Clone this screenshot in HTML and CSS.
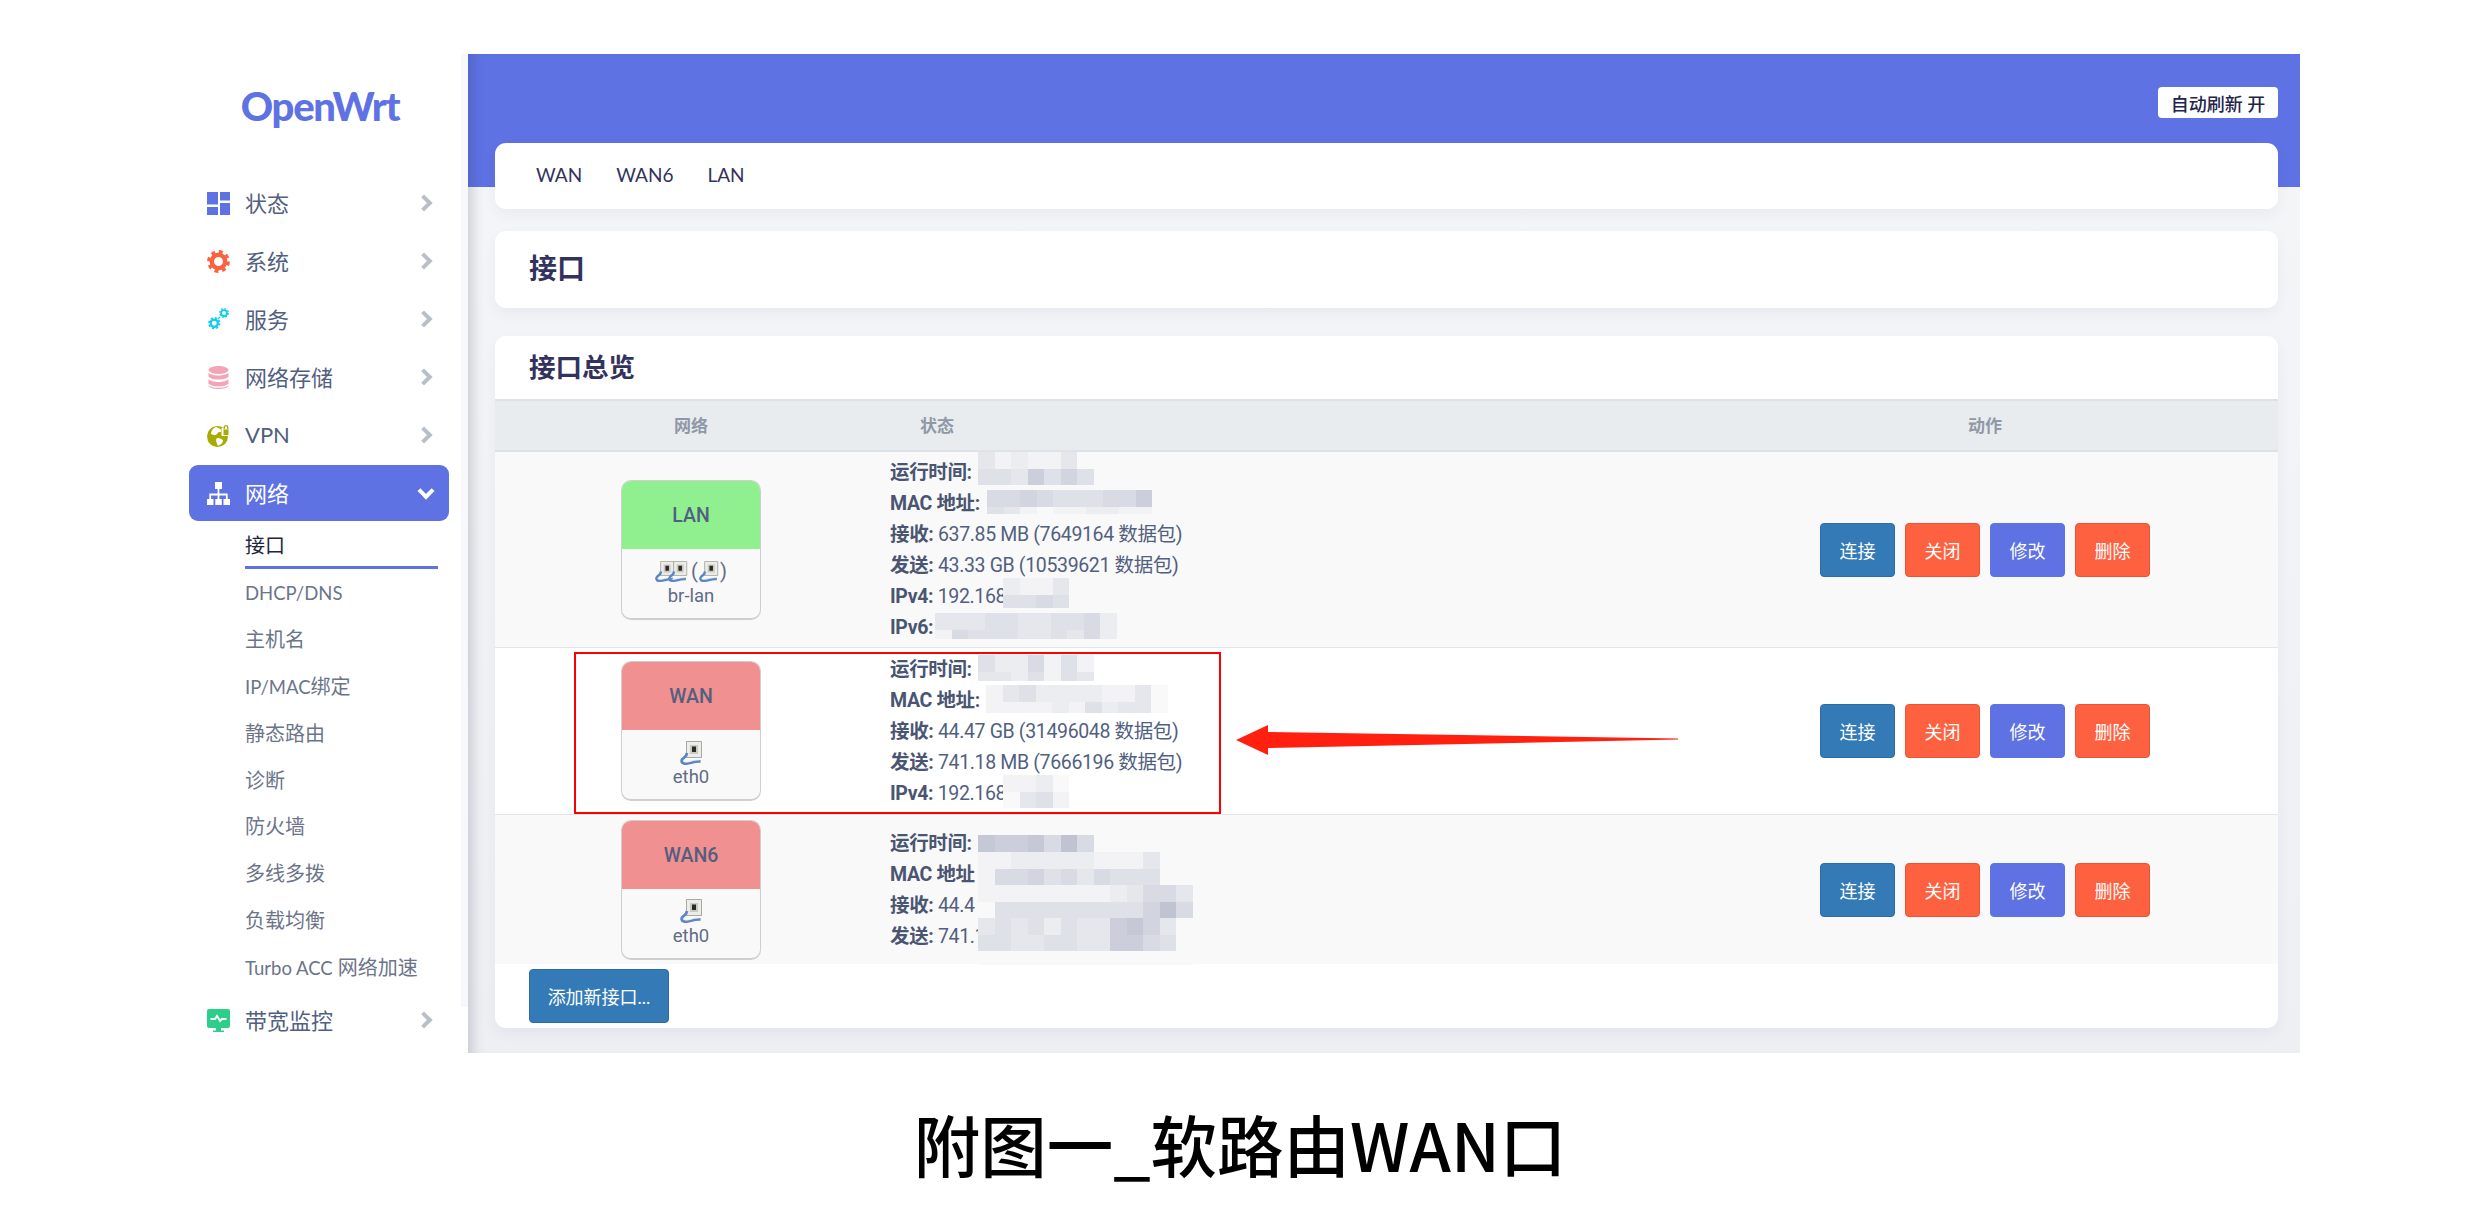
FILE: index.html
```html
<!DOCTYPE html>
<html lang="zh-CN">
<head>
    <meta charset="UTF-8">
    <title>附图一_软路由WAN口</title>
    <link rel="stylesheet" href="styles.css">
</head>
<body>

<svg class="defs" width="0" height="0">
    <symbol id="gear" viewBox="0 0 24 24">
        <circle cx="12" cy="12" r="7" fill="none" stroke="currentColor" stroke-width="4.6"/>
        <circle cx="12" cy="12" r="10.3" fill="none" stroke="currentColor" stroke-width="3.2" stroke-dasharray="4.1 3.99"/>
    </symbol>
    <symbol id="eth" viewBox="0 0 22 24">
        <path d="M6 .5h15v16H6z" fill="#ecece8" stroke="#a9a9a4"/>
        <path d="M9.500 4h8v9h-8z" fill="#c9c9c2"/>
        <path d="M11.500 5.500h4v5.500h-4z" fill="#2b2b26"/>
        <path d="M6.500 12c-.5 4-3 4.500-4.500 6s-1 4 1.500 4.500c6 1 8-2.500 16.500-2" fill="none" stroke="#5c87c2" stroke-width="2.800"/>
        <path d="M4 21c5 .5 8-2 15-2" fill="none" stroke="#dfe8f4" stroke-width=".8"/>
    </symbol>
</svg>

<div class="frame">

    <aside class="sidebar">
        <div class="logo">OpenWrt</div>

        <a class="nav-item">
            <svg class="nav-icon" viewBox="0 0 23 23" fill="#5e72e4"><path d="M0 0h11v12.500H0zM13 0h10v8.500H13zM0 15h11v8H0zM13 11h10v12H13z"/></svg>
            <span>状态</span><i class="chev"></i>
        </a>
        <a class="nav-item">
            <svg class="nav-icon icon-orange"><use href="#gear"/></svg>
            <span>系统</span><i class="chev"></i>
        </a>
        <a class="nav-item">
            <svg class="nav-icon icon-cyan" viewBox="0 0 23 23">
                <use href="#gear" x="1" y="9" width="12.500" height="12.500"/>
                <use href="#gear" x="12" y="0" width="10" height="10"/>
                <path d="M11 11l2-2" stroke="currentColor" stroke-width="1.500"/>
            </svg>
            <span>服务</span><i class="chev"></i>
        </a>
        <a class="nav-item">
            <svg class="nav-icon" viewBox="0 0 23 23" fill="#f3a4b5">
                <ellipse cx="11.500" cy="4" rx="10" ry="4"/>
                <path d="M1.500 6.500c2 4 18 4 20 0v4c-2 4-18 4-20 0zM1.500 13c2 4 18 4 20 0v6c0 5.300-20 5.300-20 0z"/>
                <path d="M1.500 18.200c3 3.800 17 3.800 20 0" fill="none" stroke="#fff" stroke-width="1.400"/>
            </svg>
            <span>网络存储</span><i class="chev"></i>
        </a>
        <a class="nav-item">
            <svg class="nav-icon" viewBox="0 0 23 23">
                <circle cx="10.500" cy="12.500" r="10.500" fill="#a8ab00"/>
                <path d="M9 3c4 1 6 3 5 5-2 0-3 0-4 2-2 2-4 1-6 0 0-3 2-6 5-7zM10 14c3 0 6 1 6 3s-3 4-5 5c-1-3-3-5-1-8z" fill="#fff"/>
                <path d="M14.500 4h8v8h-8z" fill="#fff"/>
                <path d="M16.500 5.500h5v5.500h-5z" fill="#a8ab00"/>
                <path d="M17.200 5.500v-2a1.800 1.800 0 013.600 0v2" fill="none" stroke="#a8ab00" stroke-width="1.300"/>
            </svg>
            <span>VPN</span><i class="chev"></i>
        </a>
        <a class="nav-item active">
            <svg class="nav-icon" viewBox="0 0 23 23" fill="#fff">
                <path d="M8 0h7v7H8zM0 17h6.500v6H0zM8.300 17h6.500v6H8.300zM16.500 17H23v6h-6.500z"/>
                <path d="M3.200 17v-4.500h16.600V17M11.500 7v10" fill="none" stroke="#fff" stroke-width="1.800"/>
            </svg>
            <span>网络</span><i class="chev-down"></i>
        </a>

        <div class="sub-nav">
            <a class="sub-item current">接口</a>
            <a class="sub-item"><span class="latin">DHCP/DNS</span></a>
            <a class="sub-item">主机名</a>
            <a class="sub-item"><span class="latin">IP/MAC</span>绑定</a>
            <a class="sub-item">静态路由</a>
            <a class="sub-item">诊断</a>
            <a class="sub-item">防火墙</a>
            <a class="sub-item">多线多拨</a>
            <a class="sub-item">负载均衡</a>
            <a class="sub-item"><span class="latin">Turbo ACC</span> 网络加速</a>
        </div>

        <a class="nav-item">
            <svg class="nav-icon" viewBox="0 0 23 23">
                <path d="M2 0h19a2 2 0 012 2v15a2 2 0 01-2 2H2a2 2 0 01-2-2V2a2 2 0 012-2zM9 19h5v2.500h3V23H6v-1.500h3z" fill="#2dce89"/>
                <path d="M3.500 10h4.500l2-3 3 5 2-2h4.500" fill="none" stroke="#fff" stroke-width="1.800"/>
            </svg>
            <span>带宽监控</span><i class="chev"></i>
        </a>
    </aside>

    <main class="content">
        <header class="topbar">
            <button class="refresh">自动刷新 开</button>
        </header>

        <div class="card tabs">
            <a>WAN</a>
            <a>WAN6</a>
            <a>LAN</a>
        </div>

        <div class="card page-title">
            <h2>接口</h2>
        </div>

        <div class="card overview">
            <h3>接口总览</h3>

            <div class="head-row">
                <div class="col-net">网络</div>
                <div class="col-status">状态</div>
                <div class="col-action">动作</div>
            </div>

            <div class="row row-lan">
                <div class="col-net">
                    <div class="iface">
                        <div class="iface-name lan">LAN</div>
                        <div class="iface-body">
                            <div class="iface-icons">
                                <svg class="eth small"><use href="#eth"/></svg><svg class="eth small overlap"><use href="#eth"/></svg>
                                <span class="paren">(</span><svg class="eth small"><use href="#eth"/></svg><span class="paren">)</span>
                            </div>
                            <span>br-lan</span>
                        </div>
                    </div>
                </div>
                <div class="col-status status">
                    <p><b>运行时间:</b></p>
                    <p><b>MAC 地址:</b></p>
                    <p><b>接收:</b> 637.85 MB (7649164 数据包)</p>
                    <p><b>发送:</b> 43.33 GB (10539621 数据包)</p>
                    <p><b>IPv4:</b> 192.168.</p>
                    <p><b>IPv6:</b></p>
                </div>
                <div class="col-action actions">
                    <button class="btn blue">连接</button>
                    <button class="btn orange">关闭</button>
                    <button class="btn indigo">修改</button>
                    <button class="btn orange">删除</button>
                </div>
                <div class="mosaic m-lan-up" data-rows="3121130 4437464"></div>
                <div class="mosaic m-lan-mac" data-rows="55654445570 43101122110"></div>
                <div class="mosaic m-lan-ip4" data-rows="2113 4454"></div>
                <div class="mosaic m-lan-ip6" data-rows="33344334452 15444334352"></div>
            </div>

            <div class="row row-wan">
                <div class="col-net">
                    <div class="iface">
                        <div class="iface-name wan">WAN</div>
                        <div class="iface-body">
                            <div class="iface-icons"><svg class="eth"><use href="#eth"/></svg></div>
                            <span>eth0</span>
                        </div>
                    </div>
                </div>
                <div class="col-status status">
                    <p><b>运行时间:</b></p>
                    <p><b>MAC 地址:</b></p>
                    <p><b>接收:</b> 44.47 GB (31496048 数据包)</p>
                    <p><b>发送:</b> 741.18 MB (7666196 数据包)</p>
                    <p><b>IPv4:</b> 192.168.</p>
                </div>
                <div class="col-action actions">
                    <button class="btn blue">连接</button>
                    <button class="btn orange">关闭</button>
                    <button class="btn indigo">修改</button>
                    <button class="btn orange">删除</button>
                </div>
                <div class="mosaic m-wan-up" data-rows="4225141 3324143"></div>
                <div class="mosaic m-wan-mac" data-rows="13422221130 11112142330"></div>
                <div class="mosaic m-wan-ip4" data-rows="1120 0341"></div>
            </div>

            <div class="row row-wan6">
                <div class="col-net">
                    <div class="iface">
                        <div class="iface-name wan">WAN6</div>
                        <div class="iface-body">
                            <div class="iface-icons"><svg class="eth"><use href="#eth"/></svg></div>
                            <span>eth0</span>
                        </div>
                    </div>
                </div>
                <div class="col-status status">
                    <p><b>运行时间:</b></p>
                    <p><b>MAC 地址</b></p>
                    <p><b>接收:</b> 44.4</p>
                    <p><b>发送:</b> 741.1</p>
                </div>
                <div class="col-action actions">
                    <button class="btn blue">连接</button>
                    <button class="btn orange">关闭</button>
                    <button class="btn indigo">修改</button>
                    <button class="btn orange">删除</button>
                </div>
                <div class="mosaic m-wan6-up" data-rows="8778595"></div>
                <div class="mosaic m-wan6-big" data-rows="11222221113 15564535444 1111111123553 0444444444695 343424337863 443344337754 0000000000000"></div>
            </div>

            <div class="add-row">
                <button class="btn blue add">添加新接口...</button>
            </div>
        </div>
    </main>

    <div class="highlight"></div>
    <svg class="arrow" viewBox="0 0 442 30"><path d="M0 15L32 0v7l410 6.500v1L32 23v7z"/></svg>
</div>

<p class="caption">附图一_软路由WAN口</p>

<script src="mosaic.js"></script>
</body>
</html>
```

FILE: styles.css
```css
body{
    margin: 0;
    background: #ffffff;
    font-family: "Lato", "Noto Sans CJK SC", sans-serif;
    color: #525f7f;
}

.defs{
    position: absolute;
}

.frame{
    position: relative;
    display: flex;
    width: 2130px;
    height: 999px;
    margin: 54px 0 0 170px;
}

/* sidebar */

.sidebar{
    box-sizing: border-box;
    flex: none;
    width: 298px;
    padding: 0 19px 0 19px;
    background: linear-gradient(to right, #ffffff 291px, #f6f8fb 291px);
    background-size: 100% 953px;
    background-repeat: no-repeat;
}

.logo{
    height: 120px;
    padding-top: 27px;
    box-sizing: border-box;
    text-align: center;
    font-family: "Lato", sans-serif;
    font-weight: 900;
    font-size: 40px;
    line-height: 50px;
    letter-spacing: -1.300px;
    color: #5e72e4;
    margin-right: -2px;
}

.nav-item{
    display: flex;
    align-items: center;
    height: 58px;
    padding-left: 18px;
    font-size: 22px;
    color: #525f7f;
}

.nav-item span{
    margin-bottom: 2px;
}

.nav-icon{
    flex: none;
    width: 23px;
    height: 23px;
    margin-right: 15px;
}

.icon-orange{
    color: #fb6340;
}

.icon-cyan{
    color: #11cdef;
}

.chev{
    width: 8px;
    height: 8px;
    margin-left: auto;
    margin-right: 19px;
    border-top: 4px solid #b9bfc9;
    border-right: 4px solid #b9bfc9;
    transform: rotate(45deg);
}

.nav-item.active{
    height: 56px;
    margin: 1px 0;
    border-radius: 9px;
    background: #5e72e4;
    color: #ffffff;
}

.chev-down{
    width: 8px;
    height: 8px;
    margin-left: auto;
    margin-right: 17px;
    margin-top: -5px;
    border-bottom: 4px solid #ffffff;
    border-right: 4px solid #ffffff;
    transform: rotate(45deg);
}

.sub-item{
    display: block;
    box-sizing: border-box;
    height: 46.900px;
    margin-left: 56px;
    margin-right: 11px;
    font-size: 20px;
    line-height: 46.900px;
    white-space: nowrap;
    color: #6b7489;
}

.latin{
    font-size: 18.500px;
}

.sub-item.current{
    height: 47px;
    border-bottom: 3px solid #5e72e4;
    color: #22263a;
}

/* main area */

.content{
    flex: 1;
    min-width: 0;
    background: linear-gradient(#f5f6f8, #eeeff3);
    box-shadow: inset 14px 0 12px -9px rgba(40, 45, 70, .18);
    padding: 0 22px 0 27px;
    margin-bottom: 0;
}

.topbar{
    display: flex;
    justify-content: flex-end;
    align-items: flex-start;
    box-sizing: border-box;
    height: 133px;
    margin: 0 -22px 0 -27px;
    padding: 33px 22px 0 0;
    background: #5e72e4;
    box-shadow: inset 14px 0 12px -9px rgba(40, 45, 70, .18);
}

.refresh{
    width: 120px;
    height: 31px;
    padding: 0;
    border: 0;
    border-radius: 4px;
    background: #ffffff;
    color: #24244a;
    font-family: inherit;
    font-size: 18px;
    font-weight: 500;
}

.card{
    background: #ffffff;
    border-radius: 11px;
    box-shadow: 0 6px 14px rgba(50, 50, 93, .05);
}

.tabs{
    display: flex;
    align-items: center;
    gap: 34px;
    box-sizing: border-box;
    height: 66px;
    margin-top: -44px;
    padding: 0 0 4px 41px;
    font-size: 19px;
    color: #32325d;
}

.page-title{
    box-sizing: border-box;
    height: 77px;
    margin-top: 22px;
    padding-left: 34px;
}

.page-title h2{
    margin: 0;
    font-size: 28px;
    font-weight: 700;
    line-height: 74px;
    color: #32325d;
}

.overview{
    height: 692px;
    margin-top: 28px;
    overflow: hidden;
}

.overview h3{
    box-sizing: border-box;
    height: 63px;
    margin: 0;
    padding-left: 34px;
    font-size: 26.500px;
    font-weight: 700;
    line-height: 62px;
    color: #32325d;
}

.head-row, .row{
    position: relative;
    display: flex;
    align-items: center;
}

.head-row{
    box-sizing: border-box;
    height: 53px;
    padding-bottom: 2px;
    border-top: 2px solid #dee2e6;
    border-bottom: 2px solid #dee2e6;
    background: #e9ecef;
    font-size: 17px;
    font-weight: 700;
    color: #8f98a6;
}

.col-net{
    flex: none;
    width: 392px;
    text-align: center;
}

.col-status{
    flex: 1;
    min-width: 0;
    padding-left: 3px;
}

.head-row .col-status{
    padding-left: 33px;
}

.col-action{
    flex: none;
    width: 586px;
    text-align: center;
}

.row{
    box-sizing: border-box;
    border-bottom: 1px solid #e4e5e7;
}

.row-lan{
    height: 196px;
    background: #f9f9f9;
}

.row-wan{
    height: 167px;
    background: #ffffff;
}

.row-wan6{
    height: 149px;
    background: #f9f9f9;
    border-bottom: 0;
}

/* interface box */

.iface{
    box-sizing: border-box;
    width: 140px;
    height: 140px;
    margin: 0 auto;
    border: 1px solid #cfcfcf;
    border-bottom-width: 2px;
    border-radius: 10px;
    overflow: hidden;
    background: #f9f9f9;
    font-family: "Roboto", "Noto Sans CJK SC", sans-serif;
}

.iface-name{
    height: 68px;
    font-size: 19.500px;
    font-weight: 500;
    line-height: 70px;
}

.lan{
    background: #90f090;
}

.wan{
    background: #f09090;
}

.iface-body{
    padding-top: 11px;
    font-size: 18.500px;
    line-height: 24px;
    color: #5f6c86;
}

.iface-icons{
    display: flex;
    justify-content: center;
    align-items: center;
    height: 23px;
    margin-bottom: 1px;
}

.eth{
    width: 23px;
    height: 24px;
}

.eth.small{
    width: 20px;
    height: 21px;
}

.eth.overlap{
    margin-left: -7px;
}

.paren{
    margin: 0 1px 0 3px;
    font-size: 20px;
}

.paren + .eth + .paren{
    margin: 0 0 0 1px;
}

/* status column */

.status p{
    margin: 0;
    font-family: "Roboto", "Noto Sans CJK SC", sans-serif;
    font-size: 19.500px;
    letter-spacing: -.35px;
    line-height: 31px;
    white-space: nowrap;
}

.status b{
    color: #4a5572;
}

.actions{
    display: flex;
    justify-content: center;
    gap: 10px;
}

.btn{
    box-sizing: border-box;
    width: 75px;
    height: 54px;
    padding: 0;
    border: 1px solid transparent;
    border-radius: 4px;
    color: #ffffff;
    font-family: inherit;
    font-size: 18px;
}

.blue{
    background: #337ab7;
    border-color: #2e6da4;
}

.orange{
    background: #fe6140;
    border-color: #ea5434;
}

.indigo{
    background: #5e72e4;
    border-color: #5e72e4;
}

.add-row{
    padding: 5px 0 0 34px;
}

.btn.add{
    width: 140px;
}

/* pixelated parts of the screenshot */

.mosaic{
    position: absolute;
    overflow: hidden;
}

.mosaic-row{
    display: flex;
    height: 16.500px;
}

.mosaic-row span{
    flex: none;
    width: 16.500px;
}

.m-lan-up{ left: 483px; top: 0; height: 33px; }
.m-lan-mac{ left: 492px; top: 38px; height: 24px; }
.m-lan-ip4{ left: 508px; top: 126px; height: 30px; }
.m-lan-ip6{ left: 440px; top: 161px; height: 26px; }
.m-wan-up{ left: 483px; top: 7px; height: 26px; }
.m-wan-mac{ left: 491px; top: 37px; height: 28px; }
.m-wan-ip4{ left: 508px; top: 127px; height: 33px; }
.m-wan6-up{ left: 483px; top: 20px; height: 17px; }
.m-wan6-big{ left: 483px; top: 37px; height: 113px; }

/* annotations */

.highlight{
    position: absolute;
    left: 404px;
    top: 598px;
    width: 643px;
    height: 158px;
    border: 2px solid #ff0000;
}

.arrow{
    position: absolute;
    left: 1066px;
    top: 671px;
    width: 442px;
    height: 30px;
    fill: #ff2010;
}

.caption{
    margin: 48px 0 0;
    text-align: center;
    font-size: 66.500px;
    font-weight: 500;
    line-height: 84px;
    font-family: "Noto Sans CJK SC", sans-serif;
    color: #000000;
}
```

FILE: mosaic.js
```js
// builds the blurred blocks from the digits in data-rows, 0 = lightest
var blocks = document.querySelectorAll('.mosaic');

for (var i = 0; i < blocks.length; i++) {
    var rows = blocks[i].getAttribute('data-rows').split(' ');
    for (var r = 0; r < rows.length; r++) {
        var line = document.createElement('div');
        line.className = 'mosaic-row';
        for (var c = 0; c < rows[r].length; c++) {
            var d = parseInt(rows[r][c], 10);
            var cell = document.createElement('span');
            cell.style.background = 'rgb(' + (249 - d * 6.5) + ',' + (249 - d * 6) + ',' + (250 - d * 4.5) + ')';
            line.appendChild(cell);
        }
        blocks[i].appendChild(line);
    }
}
```
